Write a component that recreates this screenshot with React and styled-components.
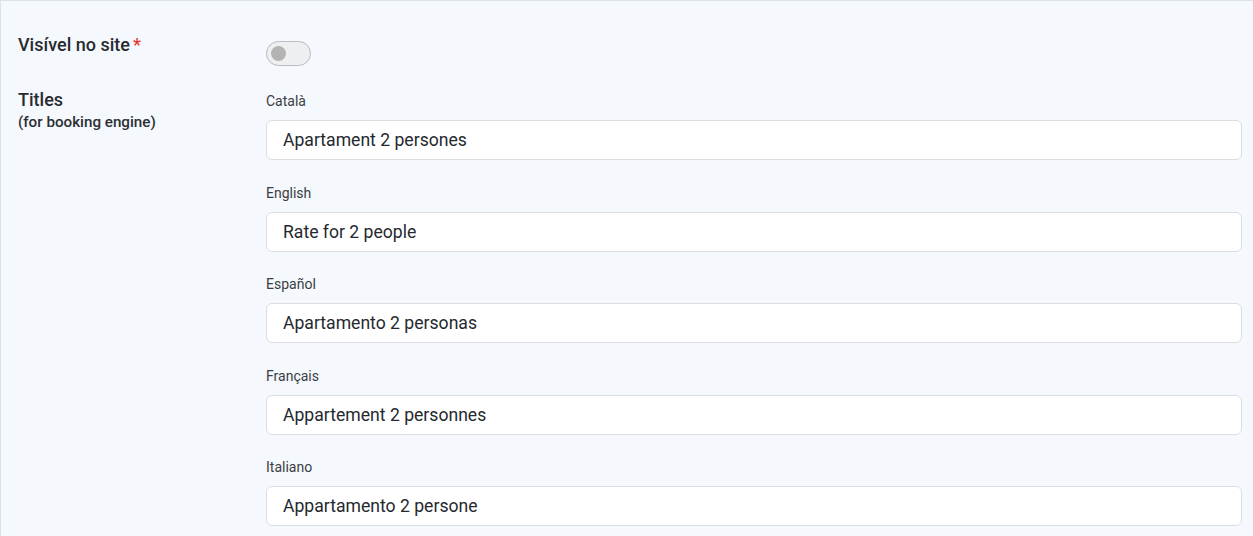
import React, { useState } from "react";
import styled, { createGlobalStyle } from "styled-components";

const GlobalStyle = createGlobalStyle`
  body {
    margin: 0;
    font-family: Roboto, "Liberation Sans", sans-serif;
    background: #f5f8fc;
  }
`;

const Panel = styled.div`
  box-sizing: border-box;
  height: 536px;
  border-top: 1px solid #dde2e8;
  border-left: 1px solid #dde2e8;
  background: #f5f8fc;
  padding: 32px 11px 0 17px;
  overflow: hidden;
`;

const Row = styled.div`
  display: grid;
  grid-template-columns: 248px 1fr;
  margin-bottom: ${(p) => p.gap ?? 0}px;
`;

const RowLabel = styled.div`
  font-size: 18px;
  line-height: 24px;
  font-weight: 500;
  color: #272b30;
`;

const Hint = styled.div`
  font-size: 15.2px;
  line-height: 21px;
  font-weight: 500;
  color: #2c3035;
`;

const Required = styled.span`
  color: #e53935;
  margin-left: 3px;
`;

const Track = styled.button`
  box-sizing: border-box;
  width: 45px;
  height: 25px;
  margin-top: 8px;
  border-radius: 13px;
  border: 1px solid #b9bcc0;
  background: ${(p) => (p.on ? "#3b82f6" : "#eeeff1")};
  padding: 0;
  position: relative;
  cursor: pointer;
`;

const Knob = styled.span`
  position: absolute;
  top: 4px;
  left: ${(p) => (p.on ? "24px" : "4px")};
  width: 15px;
  height: 15px;
  border-radius: 50%;
  background: ${(p) => (p.on ? "#fff" : "#b3b3b3")};
`;

const Fields = styled.div`
  display: flex;
  flex-direction: column;
  gap: 22.5px;
  padding-top: 3px;
`;

const Field = styled.div`
  display: flex;
  flex-direction: column;
`;

const FieldLabel = styled.label`
  font-size: 14px;
  line-height: 20px;
  color: #3a3e43;
  margin-bottom: 9px;
`;

const TextInput = styled.input`
  box-sizing: border-box;
  width: 100%;
  height: 40px;
  padding: 0 16px;
  border: 1px solid #dadee3;
  border-radius: 6px;
  background: #fff;
  font-family: Roboto, "Liberation Sans", sans-serif;
  font-size: 17.6px;
  color: #25292e;
  &:focus {
    outline: none;
    border-color: #86b7fe;
  }
`;

const titles = [
  { lang: "Català", value: "Apartament 2 persones" },
  { lang: "English", value: "Rate for 2 people" },
  { lang: "Español", value: "Apartamento 2 personas" },
  { lang: "Français", value: "Appartement 2 personnes" },
  { lang: "Italiano", value: "Appartamento 2 persone" },
];

export default function App() {
  const [visible, setVisible] = useState(false);
  const [values, setValues] = useState(titles.map((t) => t.value));

  return (
    <>
      <GlobalStyle />
      <Panel>
        <Row gap={19}>
          <RowLabel>
            Visível no site<Required>*</Required>
          </RowLabel>
          <div>
            <Track on={visible ? 1 : 0} onClick={() => setVisible(!visible)}>
              <Knob on={visible ? 1 : 0} />
            </Track>
          </div>
        </Row>
        <Row>
          <div>
            <RowLabel>Titles</RowLabel>
            <Hint>(for booking engine)</Hint>
          </div>
          <Fields>
            {titles.map((t, i) => (
              <Field key={t.lang}>
                <FieldLabel>{t.lang}</FieldLabel>
                <TextInput
                  value={values[i]}
                  onChange={(e) => {
                    const next = [...values];
                    next[i] = e.target.value;
                    setValues(next);
                  }}
                />
              </Field>
            ))}
          </Fields>
        </Row>
      </Panel>
    </>
  );
}
